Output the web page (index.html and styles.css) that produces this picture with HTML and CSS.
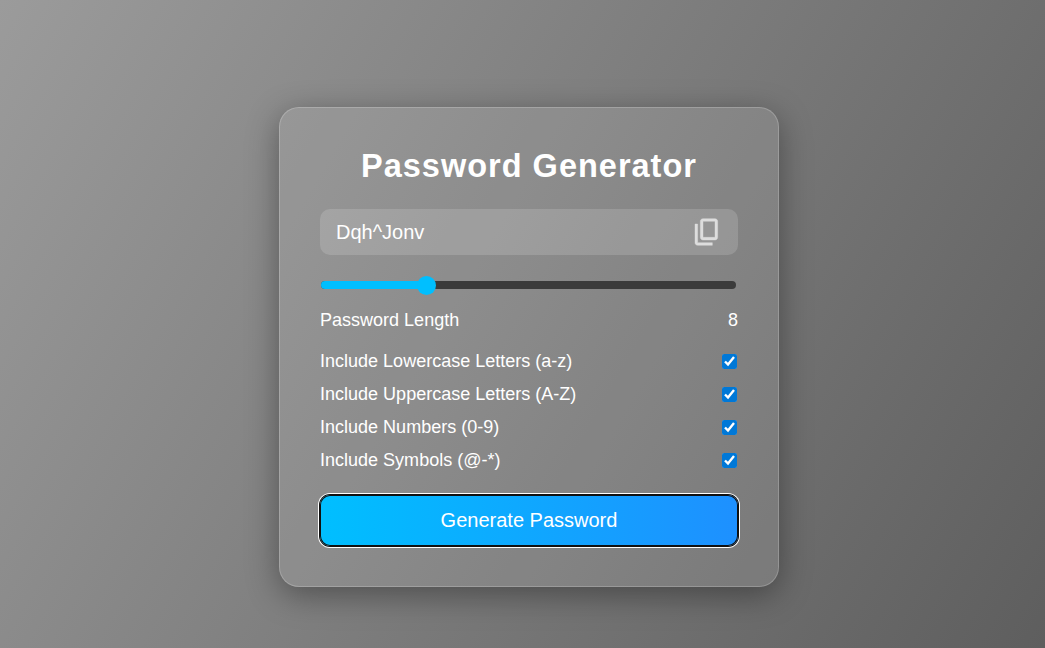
FILE: index.html
```html
<!DOCTYPE html>
<html lang="en">
<head>
<meta charset="utf-8">
<title>Password Generator</title>
<link rel="stylesheet" href="styles.css">
</head>
<body>
<main class="container">
  <h1>Password Generator</h1>
  <div class="display">
    <span>Dqh^Jonv</span>
    <svg class="copy" viewBox="0 -960 960 960" aria-label="Copy"><path d="M360-240q-33 0-56.500-23.500T280-320v-480q0-33 23.500-56.500T360-880h360q33 0 56.500 23.500T800-800v480q0 33-23.500 56.500T720-240H360Zm0-80h360v-480H360v480ZM200-80q-33 0-56.500-23.500T120-160v-560h80v560h440v80H200Z"/></svg>
  </div>
  <div class="slider"><div class="fill"></div><div class="thumb"></div></div>
  <div class="row length"><span>Password Length</span><span>8</span></div>
  <label class="row"><span>Include Lowercase Letters (a-z)</span><input type="checkbox" checked></label>
  <label class="row"><span>Include Uppercase Letters (A-Z)</span><input type="checkbox" checked></label>
  <label class="row"><span>Include Numbers (0-9)</span><input type="checkbox" checked></label>
  <label class="row"><span>Include Symbols (@-*)</span><input type="checkbox" checked></label>
  <button class="generate">Generate Password</button>
</main>
</body>
</html>
```
FILE: styles.css
```css
* { box-sizing: border-box; margin: 0; padding: 0; }
body {
  display: flow-root;
  height: 648px;
  overflow: hidden;
  font-family: "Liberation Sans", Arial, sans-serif;
  color: #fff;
  background: linear-gradient(120deg, #9b9b9b, #5e5e5e);
}
.container {
  width: 500px;
  height: 480px;
  margin: 107px 0 0 279px;
  padding: 39px 40px 0;
  border: 1px solid rgba(255, 255, 255, .2);
  border-radius: 20px;
  background: rgba(255, 255, 255, .1);
  box-shadow: 0 8px 32px rgba(0, 0, 0, .37);
}
h1 { font-size: 32.5px; line-height: 38px; text-align: center; letter-spacing: 1px; white-space: nowrap; }
.display {
  display: flex;
  align-items: center;
  justify-content: space-between;
  height: 46px;
  margin-top: 24px;
  padding: 0 15px 0 16px;
  border-radius: 10px;
  background: rgba(255, 255, 255, .15);
  font-size: 20px;
}
.copy { width: 32px; height: 32px; fill: #ddd; stroke: #ddd; stroke-width: 12; }
.slider { position: relative; height: 8px; margin: 26px 2px 0 1px; border-radius: 4px; background: #3b3b3b; }
.fill { width: 105px; height: 100%; border-radius: 4px; background: #00bfff; }
.thumb { position: absolute; left: 95.5px; top: -5.5px; width: 19px; height: 19px; border-radius: 50%; background: #00bfff; }
.row { display: flex; align-items: center; justify-content: space-between; height: 33px; font-size: 18.03px; }
.length { margin: 15px 0 8px; }
.row input { width: 15px; height: 15px; margin-right: 1px; accent-color: #0078d7; }
.generate {
  display: block;
  width: 418px;
  height: 51px;
  margin-top: 18px;
  border: 0;
  border-radius: 10px;
  background: linear-gradient(90deg, #00bfff, #1e90ff);
  color: #fff;
  font: 20px "Liberation Sans", Arial, sans-serif;
  box-shadow: inset 0 0 0 1px #101010, 0 0 0 1px #101010, 0 0 0 2px #fff;
}
```
